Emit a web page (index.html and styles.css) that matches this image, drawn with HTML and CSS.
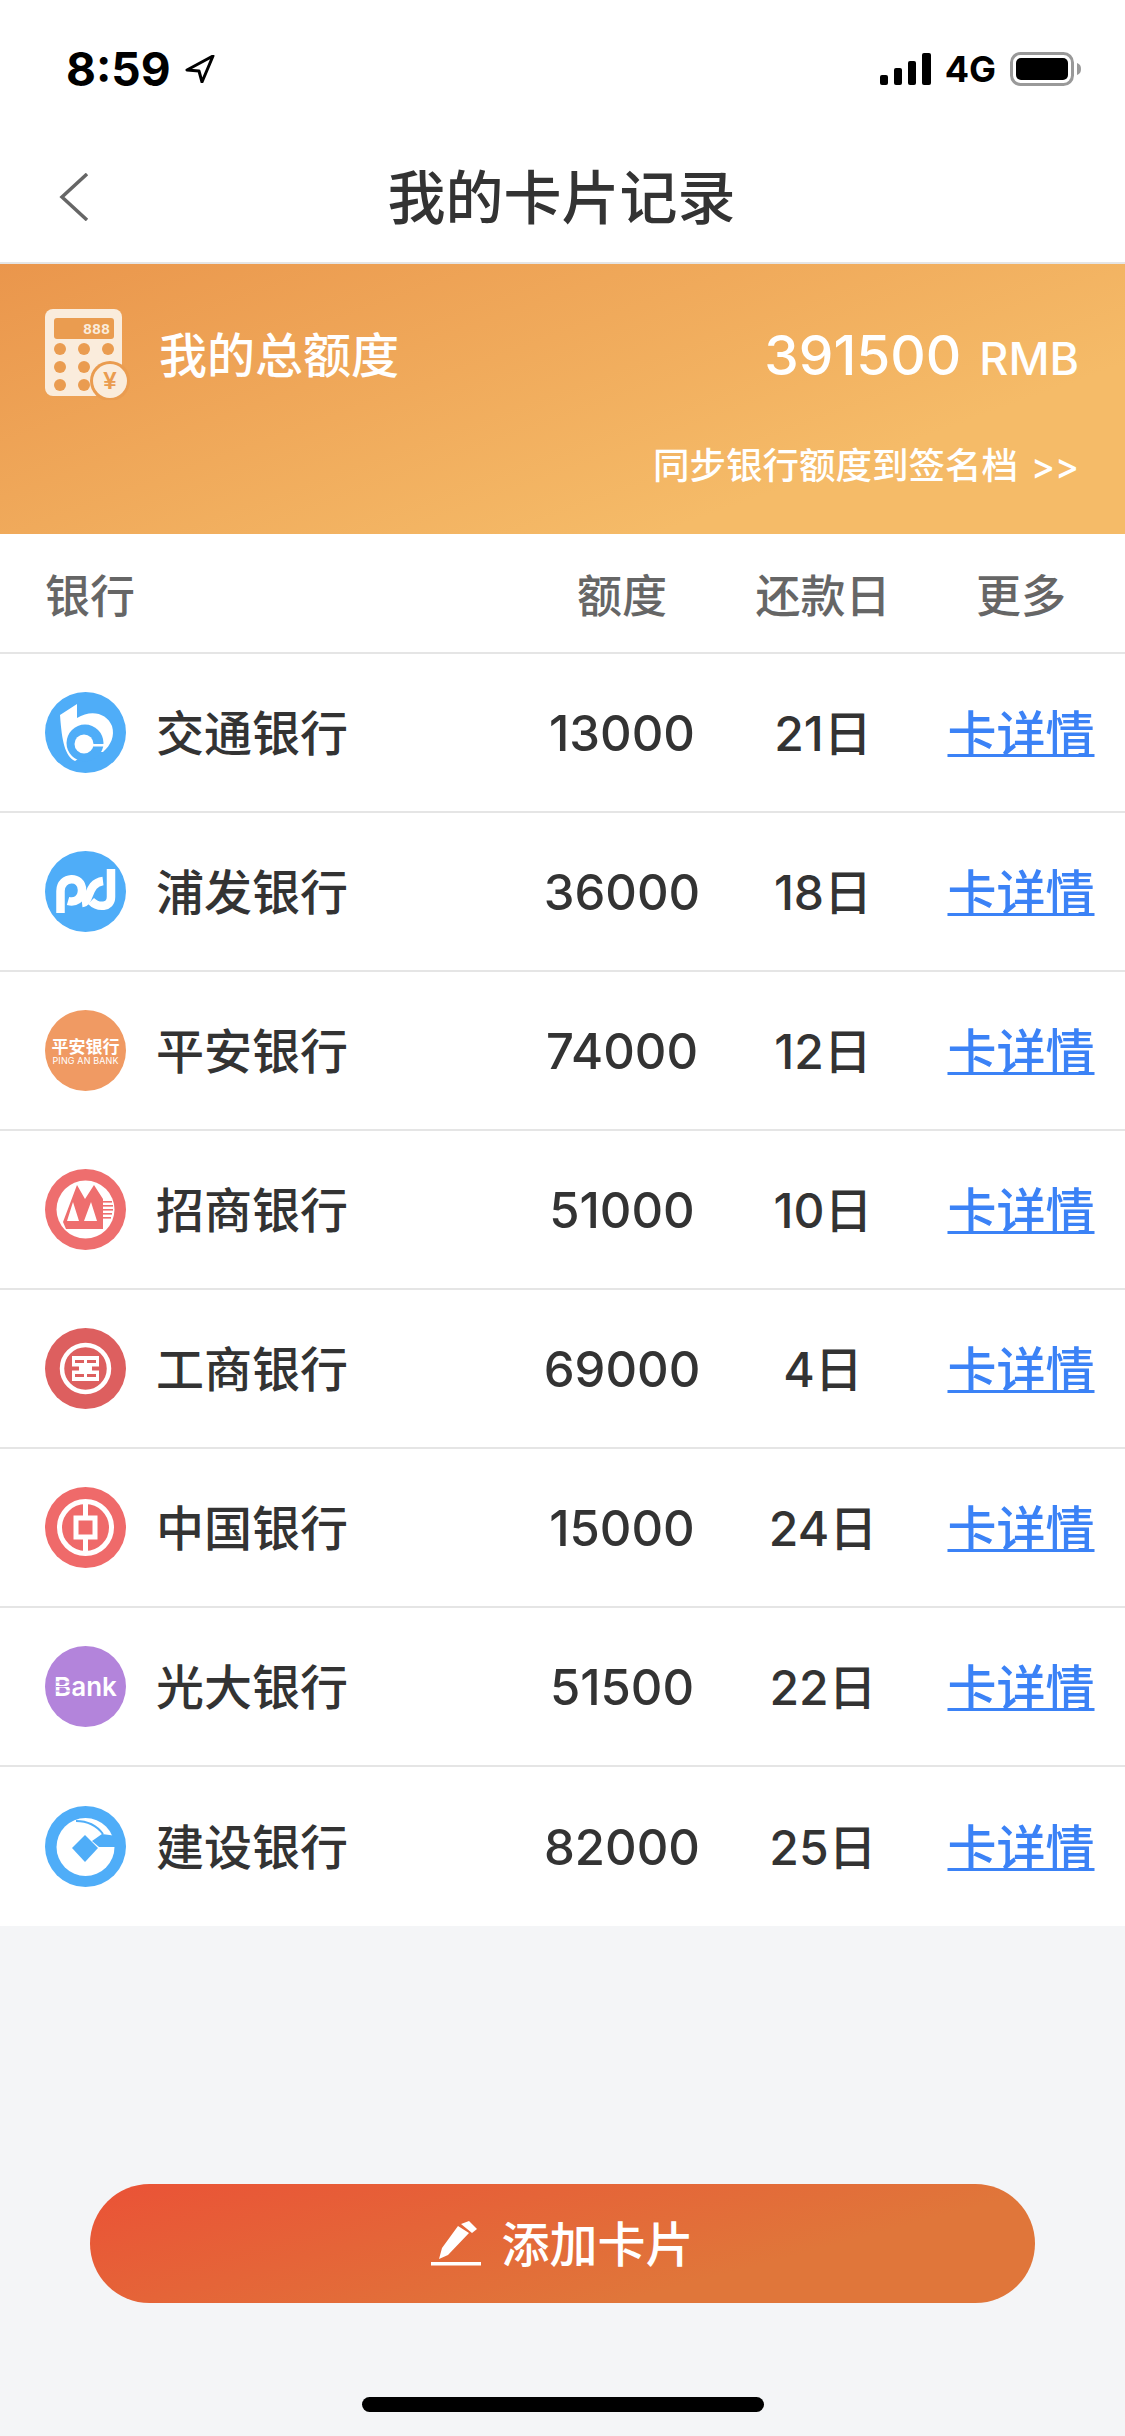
FILE: index.html
```html
<!DOCTYPE html>
<html lang="zh">
<head>
  <meta charset="UTF-8">
  <meta name="viewport" content="width=device-width, initial-scale=1.0">
  <title>我的卡片记录</title>
  <link rel="stylesheet" href="styles.css">
</head>
<body>
  <div class="status-bar">
    <div class="status-left">
      <span class="time">8:59</span>
      <svg class="location" viewBox="0 0 30 28"><path d="M28 1 L2 15 L14 16 L17 27 Z" fill="none" stroke="#000" stroke-width="3" stroke-linejoin="round"/></svg>
    </div>
    <div class="status-right">
      <svg class="signal" viewBox="0 0 51 32"><rect x="0" y="22" width="8" height="10" rx="2"/><rect x="14" y="15" width="8" height="17" rx="2"/><rect x="28" y="8" width="8" height="24" rx="2"/><rect x="42" y="0" width="9" height="32" rx="2"/></svg>
      <span class="network">4G</span>
      <svg class="battery" viewBox="0 0 72 34"><rect x="1.5" y="1.5" width="61" height="31" rx="9" fill="none" stroke="#999" stroke-width="3"/><rect x="6" y="6" width="52" height="22" rx="5"/><path d="M67 11 C70 12 71 14 71 17 C71 20 70 22 67 23 Z" fill="#999"/></svg>
    </div>
  </div>

  <header class="nav">
    <svg class="back" viewBox="0 0 30 48"><path d="M28 1 L3 24 L28 47" fill="none" stroke="#666" stroke-width="3.5"/></svg>
    <h1 class="nav-title">我的卡片记录</h1>
  </header>

  <section class="banner">
    <div class="banner-top">
      <svg class="calc" viewBox="25 19 85 91">
        <rect x="25" y="19" width="77" height="87" rx="8" fill="#faecdc"/>
        <rect x="34" y="28" width="60" height="21" rx="3" fill="#ea9c50"/>
        <text x="90" y="44" class="calc-digits" text-anchor="end">888</text>
        <g fill="#ea9c50">
          <circle cx="40" cy="59" r="6"/><circle cx="64" cy="59" r="6"/><circle cx="88" cy="59" r="6"/>
          <circle cx="40" cy="77" r="6"/><circle cx="64" cy="77" r="6"/>
          <circle cx="40" cy="95" r="6"/><circle cx="64" cy="95" r="6"/>
          <circle cx="90" cy="91" r="20"/>
        </g>
        <circle cx="90" cy="91" r="17" fill="#faecdc"/>
        <text x="90" y="99" class="calc-yen" text-anchor="middle">¥</text>
      </svg>
      <span class="banner-label">我的总额度</span>
      <span class="banner-total">391500<span class="banner-unit">RMB</span></span>
    </div>
    <div class="banner-sync">同步银行额度到签名档<span class="sync-arrows">&gt;&gt;</span></div>
  </section>

  <main class="card-list">
    <div class="row row-head">
      <span>银行</span>
      <span class="cell">额度</span>
      <span class="cell">还款日</span>
      <span class="cell">更多</span>
    </div>

    <div class="row">
      <div class="bank">
        <svg class="logo" viewBox="0 0 81 81">
          <circle cx="40.5" cy="40.5" r="40.5" fill="#4fadf8"/>
          <path d="M15 23 L32 12 V26 C46 17 62 21 67 34 C70 44 66 53 58 60 L44 60 L30 69 C20 64 17 50 15 23 Z" fill="#fff"/>
          <circle cx="40" cy="51" r="18.5" fill="#4fadf8"/>
          <circle cx="39" cy="52" r="9.5" fill="#fff"/>
          <rect x="46" y="52" width="13" height="2.5" fill="#fff"/>
        </svg>
        <span class="name">交通银行</span>
      </div>
      <span class="cell num amount">13000</span>
      <span class="cell num day">21日</span>
      <a class="cell link" href="#">卡详情</a>
    </div>

    <div class="row">
      <div class="bank">
        <svg class="logo" viewBox="0 0 81 81">
          <circle cx="40.5" cy="40.5" r="40.5" fill="#4fadf8"/>
          <g fill="none" stroke="#fff" stroke-width="8.5">
            <path d="M15.5 62 V40 C15.5 25 37 24 37 39 C37 48 30 52 23 50"/>
            <path d="M37 52 C46 51 42 32 58 30"/>
            <path d="M66 18 V46 C66 57 53 57 46 50"/>
          </g>
        </svg>
        <span class="name">浦发银行</span>
      </div>
      <span class="cell num amount">36000</span>
      <span class="cell num day">18日</span>
      <a class="cell link" href="#">卡详情</a>
    </div>

    <div class="row">
      <div class="bank">
        <svg class="logo" viewBox="0 0 81 81">
          <circle cx="40.5" cy="40.5" r="40.5" fill="#f09a63"/>
          <text x="40.5" y="43" class="pingan-cn" text-anchor="middle">平安银行</text>
          <text x="40.5" y="54" class="pingan-en" text-anchor="middle" textLength="66">PING AN BANK</text>
        </svg>
        <span class="name">平安银行</span>
      </div>
      <span class="cell num amount">74000</span>
      <span class="cell num day">12日</span>
      <a class="cell link" href="#">卡详情</a>
    </div>

    <div class="row">
      <div class="bank">
        <svg class="logo" viewBox="0 0 81 81">
          <circle cx="40.5" cy="40.5" r="40.5" fill="#ee6e6e"/>
          <circle cx="40.5" cy="40.5" r="29" fill="#fff"/>
          <path d="M18 53 L32 16 L40 30 L49 16 L58 30 V60 H21 Z" fill="#ee6e6e"/>
          <path d="M28 33 L34 52 H22 Z M46 33 L52 52 H39 Z" fill="#fff"/>
          <g fill="#ee6e6e">
            <rect x="58" y="32" width="9" height="1.6"/><rect x="58" y="36" width="10" height="1.6"/><rect x="58" y="40" width="10" height="1.6"/><rect x="58" y="44" width="9" height="1.6"/><rect x="58" y="48" width="8" height="1.6"/>
          </g>
        </svg>
        <span class="name">招商银行</span>
      </div>
      <span class="cell num amount">51000</span>
      <span class="cell num day">10日</span>
      <a class="cell link" href="#">卡详情</a>
    </div>

    <div class="row">
      <div class="bank">
        <svg class="logo" viewBox="0 0 81 81">
          <circle cx="40.5" cy="40.5" r="40.5" fill="#dd5f5f"/>
          <circle cx="40.5" cy="40.5" r="23.5" fill="none" stroke="#fff" stroke-width="4.5"/>
          <rect x="27" y="28" width="27" height="25" fill="#fff"/>
          <g fill="#dd5f5f">
            <rect x="30" y="32" width="9" height="3"/><rect x="42" y="32" width="9" height="3"/>
            <rect x="30" y="46" width="9" height="3"/><rect x="42" y="46" width="9" height="3"/>
            <rect x="27" y="38.5" width="7" height="4"/><rect x="47" y="38.5" width="7" height="4"/>
          </g>
        </svg>
        <span class="name">工商银行</span>
      </div>
      <span class="cell num amount">69000</span>
      <span class="cell num day">4日</span>
      <a class="cell link" href="#">卡详情</a>
    </div>

    <div class="row">
      <div class="bank">
        <svg class="logo" viewBox="0 0 81 81">
          <circle cx="40.5" cy="40.5" r="40.5" fill="#ef6a6a"/>
          <circle cx="40.5" cy="40.5" r="26" fill="none" stroke="#fff" stroke-width="5"/>
          <rect x="31" y="31" width="19" height="19" fill="none" stroke="#fff" stroke-width="5"/>
          <path d="M40.5 15 V31 M40.5 50 V66" stroke="#fff" stroke-width="5"/>
        </svg>
        <span class="name">中国银行</span>
      </div>
      <span class="cell num amount">15000</span>
      <span class="cell num day">24日</span>
      <a class="cell link" href="#">卡详情</a>
    </div>

    <div class="row">
      <div class="bank">
        <svg class="logo" viewBox="0 0 81 81">
          <circle cx="40.5" cy="40.5" r="40.5" fill="#b384db"/>
          <text x="40.5" y="50" class="bank-word" text-anchor="middle">Bank</text>
          <path d="M11 36 H28 M11 40.5 H28 M11 45 H28" stroke="#b384db" stroke-width="1"/>
        </svg>
        <span class="name">光大银行</span>
      </div>
      <span class="cell num amount">51500</span>
      <span class="cell num day">22日</span>
      <a class="cell link" href="#">卡详情</a>
    </div>

    <div class="row row-last">
      <div class="bank">
        <svg class="logo" viewBox="0 0 81 81">
          <circle cx="40.5" cy="40.5" r="40.5" fill="#4fadf8"/>
          <circle cx="40.5" cy="41" r="29" fill="#fff"/>
          <path d="M47 35 L57 28 L72 30 V41 H54 Z" fill="#4fadf8"/>
          <path d="M31 15 C42 15 52 20 58 28" fill="none" stroke="#4fadf8" stroke-width="2"/>
          <path d="M40 29 L53 42 L40 56 L27 42 Z" fill="#4fadf8"/>
        </svg>
        <span class="name">建设银行</span>
      </div>
      <span class="cell num amount">82000</span>
      <span class="cell num day">25日</span>
      <a class="cell link" href="#">卡详情</a>
    </div>
  </main>

  <div class="footer">
    <button class="add-btn">
      <svg class="pen" viewBox="0 0 50 45"><path d="M8 38 L11 27 L27 5 L38 12 L17 34 Z M30 3 L38 0 L46 8 L41 12 Z" fill="#fff"/><rect x="0" y="41" width="50" height="3.5" fill="#fff"/></svg>
      <span class="add-label">添加卡片</span>
    </button>
    <div class="home-bar"></div>
  </div>
</body>
</html>
```

FILE: styles.css
```css
* {
  box-sizing: border-box;
}
body {
  margin: 0;
  width: 1125px;
  height: 2436px;
  display: flex;
  flex-direction: column;
  overflow: hidden;
  background-color: #f4f5f7;
  color: #333;
  font-family: Inter, "Noto Sans CJK SC", sans-serif;
}

/* status bar */
.status-bar {
  height: 132px;
  padding: 46px 43px 0 66px;
  display: flex;
  justify-content: space-between;
  align-items: flex-start;
  background: #fff;
  color: #000;
}
.status-left, .status-right {
  display: flex;
  align-items: center;
  height: 46px;
}
.time {
  font-size: 46px;
  font-weight: 700;
  line-height: 46px;
  width: 119px;
}
.location {
  width: 30px;
  height: 28px;
}
.signal {
  width: 51px;
  height: 32px;
}
.network {
  margin: 0 14px;
  font-size: 36px;
  font-weight: 700;
  line-height: 46px;
}
.battery {
  width: 72px;
  height: 34px;
}

/* nav */
.nav {
  height: 132px;
  padding-left: 59px;
  display: flex;
  align-items: center;
  background: #fff;
  border-bottom: 2px solid #e5e5e5;
}
.back {
  width: 30px;
  height: 48px;
}
.nav-title {
  margin: 0 auto 6px;
  padding-right: 91px;
  font-size: 58px;
  font-weight: 500;
  color: #333;
}

/* banner */
.banner {
  height: 270px;
  padding: 45px 46px 0 45px;
  background: linear-gradient(160deg, #ea964c 0%, #f5bb68 75%);
  color: #fff;
}
.banner-top {
  display: flex;
  align-items: center;
}
.calc {
  width: 85px;
  height: 91px;
}
.calc-digits {
  font-family: "Liberation Mono", monospace;
  font-size: 15px;
  font-weight: 700;
  fill: #faecdc;
}
.calc-yen {
  font-family: "Liberation Sans", sans-serif;
  font-size: 24px;
  font-weight: 700;
  fill: #ea9c50;
}
.banner-label {
  margin: 0 0 6px 29px;
  font-size: 48px;
  font-weight: 500;
}
.banner-total {
  margin-left: auto;
  font-size: 55px;
  font-weight: 500;
}
.banner-unit {
  margin-left: 18px;
  font-size: 45px;
}
.banner-sync {
  margin-top: 41px;
  text-align: right;
  font-size: 36.5px;
  font-weight: 500;
  line-height: 50px;
}
.sync-arrows {
  margin-left: 13px;
  font-size: 36px;
}

/* table */
.card-list {
  background: #fff;
}
.row {
  height: 159px;
  padding-left: 45px;
  display: grid;
  grid-template-columns: 495px 164px 238px 158px;
  align-items: center;
  border-bottom: 2px solid #e5e5e5;
  font-size: 48px;
}
.row-head {
  height: 120px;
  font-size: 45px;
  font-weight: 500;
  color: #666;
}
.row-last {
  border-bottom: none;
}
.cell {
  text-align: center;
}
.bank {
  display: flex;
  align-items: center;
}
.logo {
  width: 81px;
  height: 81px;
  margin-right: 30px;
}
.name {
  font-size: 48px;
  font-weight: 500;
  margin-bottom: 5px;
}
.pingan-cn {
  font-size: 17px;
  font-weight: 700;
  fill: #fff;
}
.pingan-en {
  font-size: 9px;
  fill: #fff;
}
.bank-word {
  font-size: 26px;
  font-weight: 600;
  fill: #fff;
}
.num {
  font-weight: 500;
}
.amount {
  margin-top: 2px;
  font-size: 49px;
}
.day {
  margin-bottom: 5px;
}
.link {
  margin-bottom: 5px;
  font-size: 49px;
  font-weight: 500;
  color: #3b82f6;
  text-decoration: underline;
  text-decoration-thickness: 3px;
}

/* bottom button */
.footer {
  flex: 1;
  display: flex;
  flex-direction: column;
  align-items: center;
  padding-top: 258px;
}
.add-btn {
  width: 945px;
  height: 119px;
  display: flex;
  align-items: center;
  justify-content: center;
  gap: 20px;
  border: none;
  border-radius: 60px;
  background: linear-gradient(165deg, #ea5236 0%, #e0763a 70%);
  color: #fff;
  font-family: inherit;
  font-size: 48px;
  font-weight: 500;
}
.add-label {
  margin-bottom: 6px;
}
.pen {
  width: 50px;
  height: 45px;
}
.home-bar {
  width: 402px;
  height: 15px;
  margin-top: 94px;
  border-radius: 8px;
  background: #000;
}
```
